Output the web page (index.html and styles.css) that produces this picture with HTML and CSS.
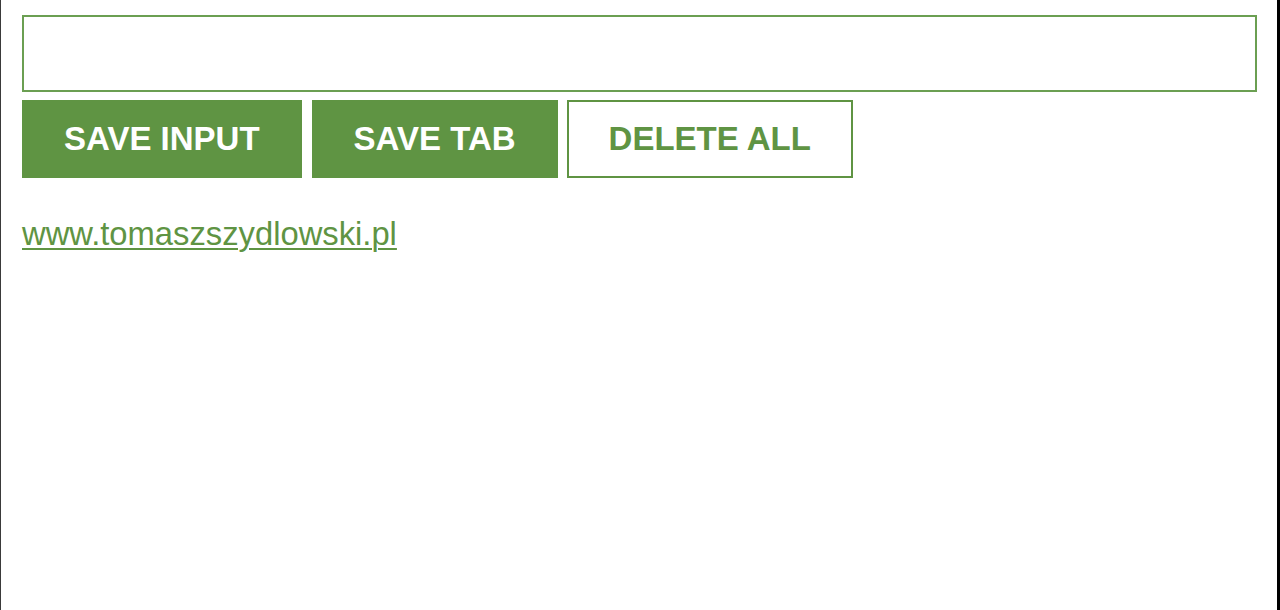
FILE: index.html
```html
<!DOCTYPE html>
<html lang="en">
<head>
<meta charset="utf-8">
<title>Leads tracker</title>
<link rel="stylesheet" href="styles.css">
</head>
<body>
<div class="frame">
  <input class="field" type="text">
  <div class="actions">
    <button class="btn btn-solid">SAVE INPUT</button>
    <button class="btn btn-solid">SAVE TAB</button>
    <button class="btn btn-outline">DELETE ALL</button>
  </div>
  <ul class="leads">
    <li><a class="lead" href="#">www.tomaszszydlowski.pl</a></li>
  </ul>
</div>
</body>
</html>
```

FILE: styles.css
```css
html, body {
  margin: 0;
  padding: 0;
  background: #ffffff;
}

.frame {
  box-sizing: border-box;
  min-height: 610px;
  border-left: 1px solid #3a3a3a;
  border-right: 3px solid #000000;
  padding: 15px 20px 0 21px;
  font-family: "Liberation Sans", Arial, sans-serif;
}

.field {
  display: block;
  box-sizing: border-box;
  width: 100%;
  height: 77px;
  margin: 0;
  padding: 0 10px;
  border: 2px solid #6b9f52;
  background: #fff;
  font-family: inherit;
  font-size: 24px;
  outline: none;
}

.actions {
  display: flex;
  gap: 10px;
  margin-top: 8px;
}

.btn {
  box-sizing: border-box;
  height: 78px;
  margin: 0;
  padding: 0 42px;
  font-family: "Liberation Sans", Arial, sans-serif;
  font-weight: bold;
  font-size: 33px;
  cursor: pointer;
}

.btn-solid {
  background: #5f9443;
  color: #ffffff;
  border: none;
}

.btn-outline {
  background: #ffffff;
  color: #5f9443;
  border: 2px solid #5f9443;
  padding: 0 40px;
  margin-left: -1px;
}

.leads {
  list-style: none;
  margin: 0;
  padding: 0;
  margin-top: 37px;
}

.lead {
  color: #5f9443;
  font-size: 32.75px;
  text-decoration: underline;
  text-decoration-thickness: 2px;
  text-underline-offset: 3px;
}
```
